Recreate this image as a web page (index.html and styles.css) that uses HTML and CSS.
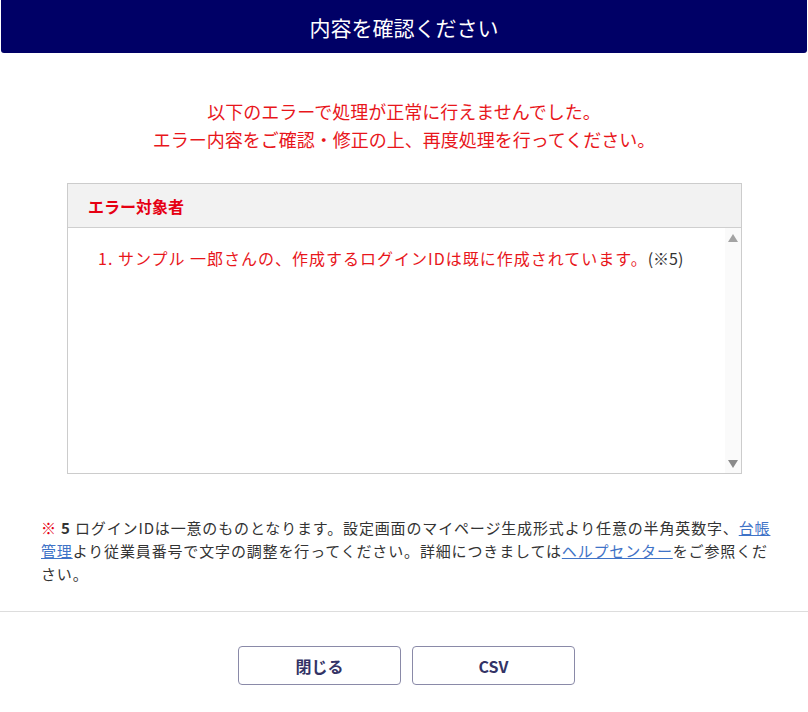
FILE: index.html
```html
<!DOCTYPE html>
<html lang="ja">
<head>
<meta charset="utf-8">
<title>内容を確認ください</title>
<link rel="stylesheet" href="styles.css">
</head>
<body>
<div class="header">内容を確認ください</div>
<div class="message">
  <p>以下のエラーで処理が正常に行えませんでした。</p>
  <p>エラー内容をご確認・修正の上、再度処理を行ってください。</p>
</div>
<div class="box">
  <div class="box-head">エラー対象者</div>
  <div class="box-body">
    <ol class="errors">
      <li>1. サンプル 一郎さんの、作成するログインIDは既に作成されています。<span class="ref">(※5)</span></li>
    </ol>
    <div class="scroll">
      <svg class="arrow" width="10" height="8" viewBox="0 0 10 8"><polygon points="5,0 10,8 0,8" fill="#a3a3a3"/></svg>
      <svg class="arrow" width="10" height="8" viewBox="0 0 10 8"><polygon points="0,0 10,0 5,8" fill="#8a8a8a"/></svg>
    </div>
  </div>
</div>
<p class="note"><span class="mark">※</span> <b>5</b> ログインIDは一意のものとなります。設定画面のマイページ生成形式より任意の半角英数字、<a href="#">台帳管理</a>より従業員番号で文字の調整を行ってください。詳細につきましては<a href="#">ヘルプセンター</a>をご参照ください。</p>
<div class="divider"></div>
<div class="actions">
  <button class="btn">閉じる</button>
  <button class="btn">CSV</button>
</div>
</body>
</html>
```
FILE: styles.css
```css
html, body {
  margin: 0;
  padding: 0;
  background: #fff;
}
body {
  font-family: "Noto Sans CJK JP", "Noto Sans", sans-serif;
  color: #333;
  width: 808px;
}
.header {
  margin: 0 1px;
  height: 53px;
  background: #000066;
  border-radius: 0 0 3px 3px;
  color: #fff;
  font-size: 21px;
  display: flex;
  align-items: center;
  justify-content: center;
}
.message {
  padding-top: 44px;
  text-align: center;
  color: #e8161b;
  font-size: 18px;
  line-height: 28px;
}
.message p {
  margin: 0;
}
.box {
  margin: 30px 66px 0 67px;
  border: 1px solid #cccccc;
}
.box-head {
  height: 43px;
  background: #f2f2f2;
  border-bottom: 1px solid #cfcfcf;
  padding-left: 20px;
  display: flex;
  align-items: center;
  color: #e60012;
  font-weight: bold;
  font-size: 16px;
}
.box-body {
  display: flex;
  height: 245px;
}
.errors {
  flex: 1;
  list-style: none;
  margin: 0;
  padding: 18px 0 0 30px;
  color: #e8161b;
  font-size: 16px;
  line-height: 24px;
  letter-spacing: 1px;
}
.ref {
  color: #333;
  letter-spacing: 0;
}
.scroll {
  width: 16px;
  background: #fafafa;
  display: flex;
  flex-direction: column;
  justify-content: space-between;
  align-items: center;
  padding: 6px 0 5px;
}
.note {
  margin: 42px 30px 0 41px;
  font-size: 15px;
  line-height: 23px;
  letter-spacing: 0.85px;
  color: #333;
}
.note .mark {
  color: #e60012;
  font-weight: bold;
}
.note a {
  color: #3f73c7;
  text-decoration: underline;
}
.divider {
  margin-top: 26px;
  border-top: 1px solid #dddddd;
}
.actions {
  display: flex;
  justify-content: center;
  gap: 11px;
  padding: 34px 0 0 5px;
}
.btn {
  width: 163px;
  height: 39px;
  background: #fff;
  border: 1px solid #8a8aa8;
  border-radius: 4px;
  font-family: "Noto Sans CJK JP", "Noto Sans", sans-serif;
  font-weight: bold;
  font-size: 16px;
  color: #333366;
}
```
